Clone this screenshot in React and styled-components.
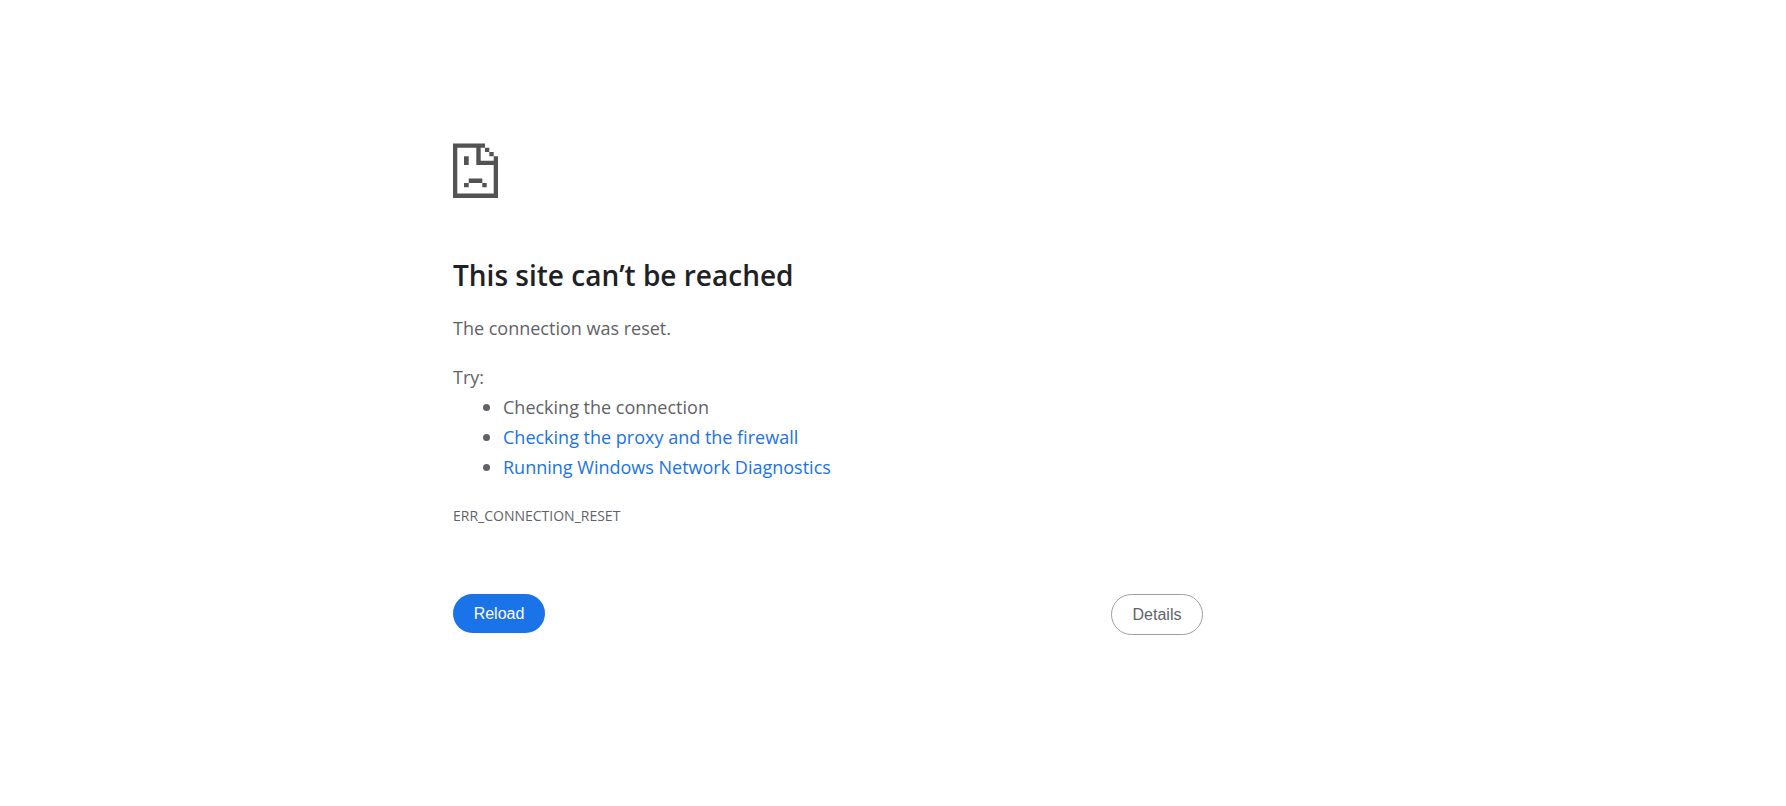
import styled, { createGlobalStyle, css } from 'styled-components';

const palette = {
  text: '#5f6368',
  heading: '#202124',
  blue: '#1a73e8',
  border: '#9aa0a6',
  icon: '#535353',
};

const GlobalStyle = createGlobalStyle`
  body {
    margin: 0;
    background: white;
    color: ${palette.text};
    font-family: 'Segoe UI', 'Open Sans', 'Noto Sans', sans-serif;
    font-size: 18px;
    line-height: 30px;
  }
`;

const Page = styled.div`
  padding: 143px 130px 48px 0;
`;

const Content = styled.main`
  max-width: 750px;
  margin: 0 auto;
`;

const PageIcon = styled.svg`
  display: block;
  width: 45px;
  height: 55px;
  fill: ${palette.icon};
`;

const Title = styled.h1`
  margin: 55px 0 16px;
  color: ${palette.heading};
  font-size: 28px;
  font-weight: 600;
  line-height: 44px;
`;

const Paragraph = styled.p`
  margin: 0 0 19px;
`;

const Suggestions = styled.div`
  margin-bottom: 19px;
`;

const SuggestionList = styled.ul`
  margin: 0;
  padding-left: 30px;
  list-style: none;
`;

const Suggestion = styled.li`
  display: flex;
  align-items: center;
  gap: 13px;

  &::before {
    content: '';
    width: 7px;
    height: 7px;
    border-radius: 50%;
    background: ${palette.text};
  }
`;

const SuggestionLink = styled.a`
  color: ${palette.blue};
  text-decoration: none;
`;

const ErrorCode = styled.div`
  font-size: 14px;
`;

const ButtonRow = styled.div`
  display: flex;
  justify-content: space-between;
  align-items: flex-start;
  margin-top: 63px;
`;

const buttonStyle = css`
  border: none;
  border-radius: 21px;
  min-width: 92px;
  padding: 10px 20px;
  font-family: Arial, 'Liberation Sans', sans-serif;
  font-size: 16px;
  line-height: 19px;
  cursor: pointer;
  color: white;
  background: ${palette.blue};

  ${(props) =>
    props.$outlined &&
    css`
      border: 1px solid ${palette.border};
      color: ${palette.text};
      background: white;
    `}
`;

const Button = styled.button`
  ${buttonStyle}
`;

// page outline with folded corner, then the fold steps, then the face
const SadPage = () => (
  <PageIcon viewBox="0 0 45 55" aria-hidden="true">
    <path d="M0 .5h32v4.2h-4.3v13h13v-4.4H45V55H0zM4.3 4.7v45.8h36.4V22H23.3V4.7z" />
    <path d="M32 4.7h4.3V9H32zM36.3 9h4.4v4.3h-4.4z" />
    <path d="M11 13.3h4.7V22H11zM15.7 35.5h13.6v4.4H15.7zM11 39.9h4.7v4.4H11zM29.3 39.9h4.4v4.4h-4.4z" />
  </PageIcon>
);

const App = () => {
  return (
    <>
      <GlobalStyle />
      <Page>
        <Content>
          <SadPage />
          <Title>This site can’t be reached</Title>
          <Paragraph>The connection was reset.</Paragraph>
          <Suggestions>
            Try:
            <SuggestionList>
              <Suggestion>Checking the connection</Suggestion>
              <Suggestion>
                <SuggestionLink href="#proxy">
                  Checking the proxy and the firewall
                </SuggestionLink>
              </Suggestion>
              <Suggestion>
                <SuggestionLink href="#diagnostics">
                  Running Windows Network Diagnostics
                </SuggestionLink>
              </Suggestion>
            </SuggestionList>
          </Suggestions>
          <ErrorCode>ERR_CONNECTION_RESET</ErrorCode>
          <ButtonRow>
            <Button type="button">Reload</Button>
            <Button type="button" $outlined>
              Details
            </Button>
          </ButtonRow>
        </Content>
      </Page>
    </>
  );
};

export default App;
